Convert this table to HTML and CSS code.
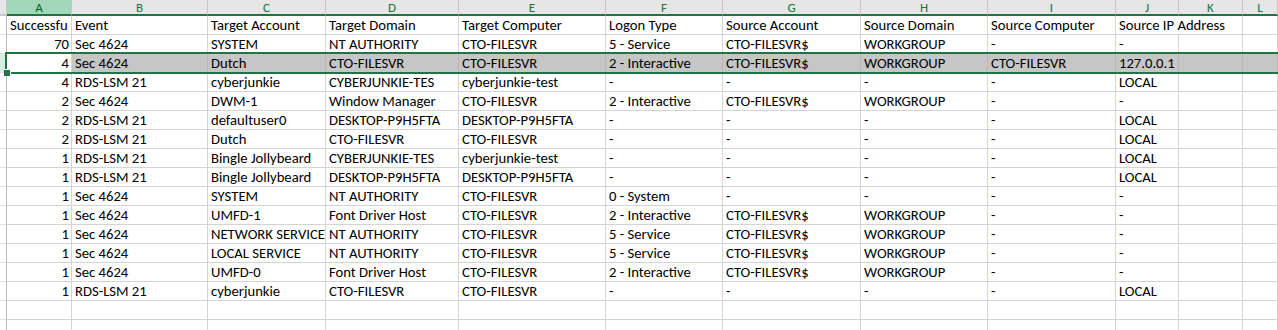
FILE: index.html
```html
<!DOCTYPE html>
<html>
<head>
<meta charset="utf-8">
<link rel="stylesheet" href="styles.css">
</head>
<body>
<div class="sheet">
  <div class="row hdr">
    <div class="c rh corner"></div>
    <div class="c ch active">A</div>
    <div class="c ch">B</div>
    <div class="c ch">C</div>
    <div class="c ch">D</div>
    <div class="c ch">E</div>
    <div class="c ch">F</div>
    <div class="c ch">G</div>
    <div class="c ch">H</div>
    <div class="c ch">I</div>
    <div class="c ch">J</div>
    <div class="c ch">K</div>
    <div class="c ch">L</div>
  </div>

  <div class="row">
    <div class="c rh"></div>
    <div class="c">Successfu</div>
    <div class="c">Event</div>
    <div class="c">Target Account</div>
    <div class="c">Target Domain</div>
    <div class="c">Target Computer</div>
    <div class="c">Logon Type</div>
    <div class="c">Source Account</div>
    <div class="c">Source Domain</div>
    <div class="c">Source Computer</div>
    <div class="c span2">Source IP Address</div>
    <div class="c"></div>
  </div>

  <div class="row">
    <div class="c rh"></div>
    <div class="c n">70</div>
    <div class="c">Sec 4624</div>
    <div class="c">SYSTEM</div>
    <div class="c">NT AUTHORITY</div>
    <div class="c">CTO-FILESVR</div>
    <div class="c">5 - Service</div>
    <div class="c">CTO-FILESVR$</div>
    <div class="c">WORKGROUP</div>
    <div class="c">-</div>
    <div class="c">-</div>
    <div class="c"></div>
    <div class="c"></div>
  </div>

  <div class="row sel">
    <div class="c rh rh-sel"></div>
    <div class="c n act">4</div>
    <div class="c">Sec 4624</div>
    <div class="c">Dutch</div>
    <div class="c">CTO-FILESVR</div>
    <div class="c">CTO-FILESVR</div>
    <div class="c">2 - Interactive</div>
    <div class="c">CTO-FILESVR$</div>
    <div class="c">WORKGROUP</div>
    <div class="c">CTO-FILESVR</div>
    <div class="c">127.0.0.1</div>
    <div class="c"></div>
    <div class="c"></div>
  </div>

  <div class="row">
    <div class="c rh"></div>
    <div class="c n">4</div>
    <div class="c">RDS-LSM 21</div>
    <div class="c">cyberjunkie</div>
    <div class="c">CYBERJUNKIE-TES</div>
    <div class="c">cyberjunkie-test</div>
    <div class="c">-</div>
    <div class="c">-</div>
    <div class="c">-</div>
    <div class="c">-</div>
    <div class="c">LOCAL</div>
    <div class="c"></div>
    <div class="c"></div>
  </div>

  <div class="row">
    <div class="c rh"></div>
    <div class="c n">2</div>
    <div class="c">Sec 4624</div>
    <div class="c">DWM-1</div>
    <div class="c">Window Manager</div>
    <div class="c">CTO-FILESVR</div>
    <div class="c">2 - Interactive</div>
    <div class="c">CTO-FILESVR$</div>
    <div class="c">WORKGROUP</div>
    <div class="c">-</div>
    <div class="c">-</div>
    <div class="c"></div>
    <div class="c"></div>
  </div>

  <div class="row">
    <div class="c rh"></div>
    <div class="c n">2</div>
    <div class="c">RDS-LSM 21</div>
    <div class="c">defaultuser0</div>
    <div class="c">DESKTOP-P9H5FTA</div>
    <div class="c">DESKTOP-P9H5FTA</div>
    <div class="c">-</div>
    <div class="c">-</div>
    <div class="c">-</div>
    <div class="c">-</div>
    <div class="c">LOCAL</div>
    <div class="c"></div>
    <div class="c"></div>
  </div>

  <div class="row">
    <div class="c rh"></div>
    <div class="c n">2</div>
    <div class="c">RDS-LSM 21</div>
    <div class="c">Dutch</div>
    <div class="c">CTO-FILESVR</div>
    <div class="c">CTO-FILESVR</div>
    <div class="c">-</div>
    <div class="c">-</div>
    <div class="c">-</div>
    <div class="c">-</div>
    <div class="c">LOCAL</div>
    <div class="c"></div>
    <div class="c"></div>
  </div>

  <div class="row">
    <div class="c rh"></div>
    <div class="c n">1</div>
    <div class="c">RDS-LSM 21</div>
    <div class="c">Bingle Jollybeard</div>
    <div class="c">CYBERJUNKIE-TES</div>
    <div class="c">cyberjunkie-test</div>
    <div class="c">-</div>
    <div class="c">-</div>
    <div class="c">-</div>
    <div class="c">-</div>
    <div class="c">LOCAL</div>
    <div class="c"></div>
    <div class="c"></div>
  </div>

  <div class="row">
    <div class="c rh"></div>
    <div class="c n">1</div>
    <div class="c">RDS-LSM 21</div>
    <div class="c">Bingle Jollybeard</div>
    <div class="c">DESKTOP-P9H5FTA</div>
    <div class="c">DESKTOP-P9H5FTA</div>
    <div class="c">-</div>
    <div class="c">-</div>
    <div class="c">-</div>
    <div class="c">-</div>
    <div class="c">LOCAL</div>
    <div class="c"></div>
    <div class="c"></div>
  </div>

  <div class="row">
    <div class="c rh"></div>
    <div class="c n">1</div>
    <div class="c">Sec 4624</div>
    <div class="c">SYSTEM</div>
    <div class="c">NT AUTHORITY</div>
    <div class="c">CTO-FILESVR</div>
    <div class="c">0 - System</div>
    <div class="c">-</div>
    <div class="c">-</div>
    <div class="c">-</div>
    <div class="c">-</div>
    <div class="c"></div>
    <div class="c"></div>
  </div>

  <div class="row">
    <div class="c rh"></div>
    <div class="c n">1</div>
    <div class="c">Sec 4624</div>
    <div class="c">UMFD-1</div>
    <div class="c">Font Driver Host</div>
    <div class="c">CTO-FILESVR</div>
    <div class="c">2 - Interactive</div>
    <div class="c">CTO-FILESVR$</div>
    <div class="c">WORKGROUP</div>
    <div class="c">-</div>
    <div class="c">-</div>
    <div class="c"></div>
    <div class="c"></div>
  </div>

  <div class="row">
    <div class="c rh"></div>
    <div class="c n">1</div>
    <div class="c">Sec 4624</div>
    <div class="c">NETWORK SERVICE</div>
    <div class="c">NT AUTHORITY</div>
    <div class="c">CTO-FILESVR</div>
    <div class="c">5 - Service</div>
    <div class="c">CTO-FILESVR$</div>
    <div class="c">WORKGROUP</div>
    <div class="c">-</div>
    <div class="c">-</div>
    <div class="c"></div>
    <div class="c"></div>
  </div>

  <div class="row">
    <div class="c rh"></div>
    <div class="c n">1</div>
    <div class="c">Sec 4624</div>
    <div class="c">LOCAL SERVICE</div>
    <div class="c">NT AUTHORITY</div>
    <div class="c">CTO-FILESVR</div>
    <div class="c">5 - Service</div>
    <div class="c">CTO-FILESVR$</div>
    <div class="c">WORKGROUP</div>
    <div class="c">-</div>
    <div class="c">-</div>
    <div class="c"></div>
    <div class="c"></div>
  </div>

  <div class="row">
    <div class="c rh"></div>
    <div class="c n">1</div>
    <div class="c">Sec 4624</div>
    <div class="c">UMFD-0</div>
    <div class="c">Font Driver Host</div>
    <div class="c">CTO-FILESVR</div>
    <div class="c">2 - Interactive</div>
    <div class="c">CTO-FILESVR$</div>
    <div class="c">WORKGROUP</div>
    <div class="c">-</div>
    <div class="c">-</div>
    <div class="c"></div>
    <div class="c"></div>
  </div>

  <div class="row">
    <div class="c rh"></div>
    <div class="c n">1</div>
    <div class="c">RDS-LSM 21</div>
    <div class="c">cyberjunkie</div>
    <div class="c">CTO-FILESVR</div>
    <div class="c">CTO-FILESVR</div>
    <div class="c">-</div>
    <div class="c">-</div>
    <div class="c">-</div>
    <div class="c">-</div>
    <div class="c">LOCAL</div>
    <div class="c"></div>
    <div class="c"></div>
  </div>

  <div class="row">
    <div class="c rh"></div>
    <div class="c"></div><div class="c"></div><div class="c"></div><div class="c"></div>
    <div class="c"></div><div class="c"></div><div class="c"></div><div class="c"></div>
    <div class="c"></div><div class="c"></div><div class="c"></div><div class="c"></div>
  </div>

  <div class="row">
    <div class="c rh"></div>
    <div class="c"></div><div class="c"></div><div class="c"></div><div class="c"></div>
    <div class="c"></div><div class="c"></div><div class="c"></div><div class="c"></div>
    <div class="c"></div><div class="c"></div><div class="c"></div><div class="c"></div>
  </div>

  <div class="selbox"></div>
  <div class="handle"></div>
</div>
</body>
</html>
```

FILE: styles.css
```css
html, body {
  margin: 0;
  padding: 0;
  background: #ffffff;
  overflow: hidden;
}

.sheet {
  position: relative;
  width: 1278px;
  height: 330px;
  overflow: hidden;
  font-family: "Carlito", "Liberation Sans", sans-serif;
  font-size: 14.67px;
  color: #000000;
}

.row {
  display: grid;
  grid-template-columns: 7px 65px 136px 118px 133px 147px 117px 138px 127px 128px 63px 64px 1fr;
  height: 19px;
}

.c {
  box-sizing: border-box;
  height: 19px;
  border-right: 1px solid #d4d4d4;
  border-bottom: 1px solid #d4d4d4;
  padding: 0 2px 0 3px;
  line-height: 19px;
  white-space: nowrap;
  overflow: hidden;
}

.c.n {
  text-align: right;
  padding: 0 2px 0 2px;
}

.span2 {
  grid-column: span 2;
  overflow: visible;
}

.rh {
  padding: 0;
  background: #ffffff;
  border-right: 1px solid #b9b9b9;
  border-bottom: 1px solid #e1e1e1;
}

.rh-sel {
  background: #d3f0e0;
}

/* column header band */
.hdr {
  height: 16px;
}

.hdr .c {
  height: 16px;
  font-size: 13px;
  line-height: 14px;
  padding: 1px 0 0 0;
  overflow: visible;
  background: #e6e6e6;
  border-right: 1px solid #c6c6c6;
  border-bottom: 2px solid #217346;
  text-align: center;
  color: #217346;
}

.hdr .corner {
  border-bottom: 2px solid #c6c6c6;
}

.hdr .active {
  background: #a0d8b9;
  color: #0c5a2e;
}

/* selected row */
.sel .c {
  background: #c6c6c6;
  border-right-color: #b8b8b8;
}

.sel .c.act {
  background: #ffffff;
  border-right-color: #d4d4d4;
}

.sel .c.rh {
  background: #d3f0e0;
  border-right-color: #b9b9b9;
}

.selbox {
  position: absolute;
  left: 5px;
  top: 52px;
  right: -4px;
  height: 22px;
  box-sizing: border-box;
  border: 2px solid #217346;
}

.handle {
  position: absolute;
  left: 4px;
  top: 69px;
  width: 7px;
  height: 7px;
  box-sizing: border-box;
  background: #217346;
  border-top: 1px solid #ffffff;
  border-right: 1px solid #ffffff;
}
```
